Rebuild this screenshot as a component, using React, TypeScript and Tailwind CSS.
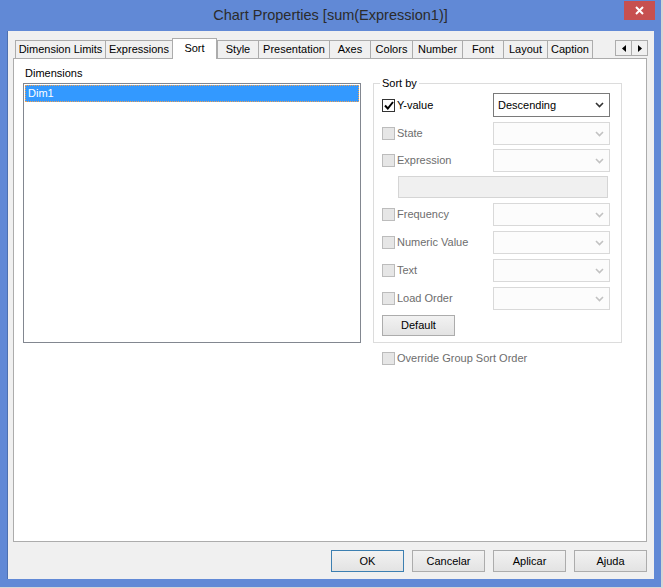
import React from 'react';

const font = { fontFamily: '"Liberation Sans", Arial, sans-serif' };

const tabs: { label: string; w: string; selected?: boolean }[] = [
  { label: 'Dimension Limits', w: 'w-[90px]' },
  { label: 'Expressions', w: 'w-[67px]' },
  { label: 'Sort', w: 'w-[45px]', selected: true },
  { label: 'Style', w: 'w-[41px]' },
  { label: 'Presentation', w: 'w-[71px]' },
  { label: 'Axes', w: 'w-[41px]' },
  { label: 'Colors', w: 'w-[42px]' },
  { label: 'Number', w: 'w-[50px]' },
  { label: 'Font', w: 'w-[41px]' },
  { label: 'Layout', w: 'w-[44px]' },
  { label: 'Caption', w: 'w-[46px]' },
];

const Chevron: React.FC<{ disabled?: boolean }> = ({ disabled }) => (
  <svg width="9" height="6" viewBox="0 0 9 6">
    <path d="M1 1 L4.5 4.5 L8 1" fill="none" stroke={disabled ? '#c2c2c2' : '#333333'} strokeWidth="1.6" />
  </svg>
);

const CheckBox: React.FC<{ checked?: boolean; disabled?: boolean }> = ({ checked, disabled }) => (
  <span
    className={`w-[13px] h-[13px] border flex items-center justify-center shrink-0 ${
      disabled ? 'border-[#bcbcbc] bg-[#e6e6e6]' : 'border-[#333333] bg-white'
    }`}
  >
    {checked && (
      <svg width="10" height="9" viewBox="0 0 10 9">
        <path d="M1 4.5 L3.8 7.5 L9 1" fill="none" stroke="#000" strokeWidth="2" />
      </svg>
    )}
  </span>
);

const Combo: React.FC<{ value?: string; disabled?: boolean; h: string }> = ({ value, disabled, h }) => (
  <div
    className={`w-[117px] ${h} border flex items-center justify-between pl-[4px] pr-[5px] ${
      disabled ? 'border-[#d9d9d9] bg-[#fcfcfc]' : 'border-[#7a7a7a] bg-white'
    }`}
  >
    <span className="text-[11px] text-black">{value}</span>
    <Chevron disabled={disabled} />
  </div>
);

const SortRow: React.FC<{ label: string; checked?: boolean; disabled?: boolean; value?: string; mt: string; h: string }> = ({
  label,
  checked,
  disabled,
  value,
  mt,
  h,
}) => (
  <div className={`flex items-center ${mt}`}>
    <div className="w-[111px] flex items-center gap-[2px]">
      <CheckBox checked={checked} disabled={disabled} />
      <span className={`text-[11px] leading-[13px] ${disabled ? 'text-[#6d6d6d]' : 'text-black'}`}>{label}</span>
    </div>
    <Combo value={value} disabled={disabled} h={h} />
  </div>
);

const DlgButton: React.FC<{ label: string; focused?: boolean }> = ({ label, focused }) => (
  <div
    className={`w-[73px] h-[22px] border flex items-center justify-center text-[11px] text-black bg-gradient-to-b from-[#f2f2f2] to-[#e3e3e3] ${
      focused ? 'border-[#3c7fb1]' : 'border-[#acacac]'
    }`}
  >
    {label}
  </div>
);

export default function App() {
  return (
    <div className="w-[663px] h-[588px] bg-[#d6d6d6] overflow-hidden" style={font}>
      <div className="w-[661px] h-[587px] bg-[#6189d6] flex flex-col">
        {/* title bar */}
        <div className="h-[31px] flex items-center justify-center relative shrink-0">
          <span className="text-[14.5px] text-[#2b2b2b]">Chart Properties [sum(Expression1)]</span>
          <div className="absolute right-[6px] top-[1px] w-[31px] h-[19px] bg-[#c75050] flex items-center justify-center">
            <svg width="9" height="9" viewBox="0 0 9 9">
              <path d="M1 1 L8 8 M8 1 L1 8" stroke="#fff" strokeWidth="2" />
            </svg>
          </div>
        </div>

        {/* client area */}
        <div className="flex-1 ml-[7px] mr-[7px] mb-[8px] bg-[#f0f0f0] border-l border-[#4d70b0] flex flex-col">
          <div className="ml-[5px] w-[634px] flex flex-col">
            {/* tabs */}
            <div className="relative z-10 mt-[7px] h-[20px] pl-[2px] flex items-end">
              {tabs.map((t, i) =>
                t.selected ? (
                  <div
                    key={t.label}
                    className={`${t.w} h-[21px] -mb-px bg-white border-l border-t border-r border-[#acacac] flex justify-center pt-[3px] text-[11px] leading-[13px] text-black`}
                  >
                    {t.label}
                  </div>
                ) : (
                  <div
                    key={t.label}
                    className={`${t.w} h-[18px] bg-[#f0f0f0] border-t border-l border-[#acacac] flex items-center justify-center text-[11px] text-black ${
                      i === tabs.length - 1 ? 'border-r' : ''
                    }`}
                  >
                    {t.label}
                  </div>
                )
              )}
              <div className="ml-auto -mr-px self-start mt-[2px] flex">
                <div className="w-[17px] h-[16px] border border-[#acacac] bg-[#f0f0f0] flex items-center justify-center">
                  <svg width="4" height="7" viewBox="0 0 4 7">
                    <path d="M4 0 L0 3.5 L4 7 Z" fill="#000" />
                  </svg>
                </div>
                <div className="w-[16px] h-[16px] border border-l-0 border-[#acacac] bg-[#f0f0f0] flex items-center justify-center">
                  <svg width="4" height="7" viewBox="0 0 4 7">
                    <path d="M0 0 L4 3.5 L0 7 Z" fill="#000" />
                  </svg>
                </div>
              </div>
            </div>

            {/* tab panel */}
            <div className="h-[484px] bg-white border border-[#acacac] pl-[9px] flex gap-[12px]">
              {/* dimensions */}
              <div className="w-[338px] flex flex-col">
                <div className="mt-[8px] ml-[2px] text-[11px] leading-[13px] text-black">Dimensions</div>
                <div className="mt-[3px] h-[260px] border border-[#828790] bg-white p-px">
                  <div className="h-[17px] bg-[#3399ff] border border-dotted border-[#f0a050] flex items-center pl-[2px] text-[11px] text-white">
                    Dim1
                  </div>
                </div>
              </div>

              {/* sort by */}
              <div className="w-[249px] flex flex-col">
                <div className="relative mt-[24px] border border-[#dcdcdc] pl-[8px] pt-[9px] pb-[6px]">
                  <span className="absolute -top-[7px] left-[6px] px-[2px] bg-white text-[11px] leading-[13px] text-black">
                    Sort by
                  </span>
                  <SortRow label="Y-value" checked value="Descending" mt="mt-0" h="h-[24px]" />
                  <SortRow label="State" disabled mt="mt-[5px]" h="h-[23px]" />
                  <SortRow label="Expression" disabled mt="mt-[4px]" h="h-[23px]" />
                  <div className="mt-[4px] ml-[16px] w-[210px] h-[22px] border border-[#d5d5d5] bg-[#f0f0f0]" />
                  <SortRow label="Frequency" disabled mt="mt-[5px]" h="h-[23px]" />
                  <SortRow label="Numeric Value" disabled mt="mt-[5px]" h="h-[23px]" />
                  <SortRow label="Text" disabled mt="mt-[5px]" h="h-[23px]" />
                  <SortRow label="Load Order" disabled mt="mt-[5px]" h="h-[23px]" />
                  <div className="mt-[5px] w-[73px] h-[21px] border border-[#acacac] bg-gradient-to-b from-[#f2f2f2] to-[#e3e3e3] flex items-center justify-center text-[11px] text-black">
                    Default
                  </div>
                </div>
                <div className="mt-[9px] ml-[9px] flex items-center gap-[2px]">
                  <CheckBox disabled />
                  <span className="text-[11px] leading-[13px] text-[#6d6d6d]">Override Group Sort Order</span>
                </div>
              </div>
            </div>

            {/* dialog buttons */}
            <div className="mt-[8px] flex justify-end gap-[8px]">
              <DlgButton label="OK" focused />
              <DlgButton label="Cancelar" />
              <DlgButton label="Aplicar" />
              <DlgButton label="Ajuda" />
            </div>
          </div>
        </div>
      </div>
    </div>
  );
}
